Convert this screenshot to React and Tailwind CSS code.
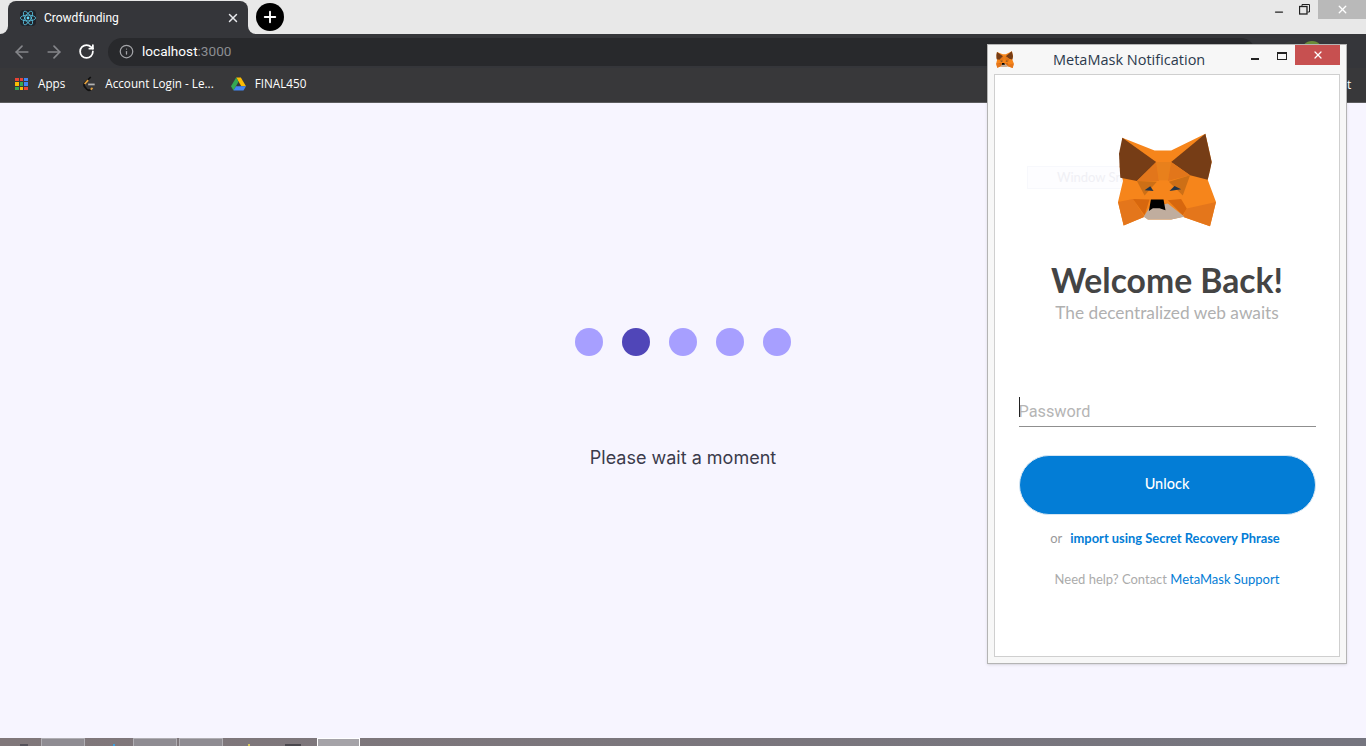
import React from "react";
import { ArrowLeft, ArrowRight, RotateCw, Info, Plus, X, Minus } from "lucide-react";

const ReactIcon = () => (
  <div className="w-4 h-4 rounded-sm bg-[#20232a] flex items-center justify-center">
    <svg viewBox="-11.5 -10.2 23 20.4" className="w-4 h-4" fill="none" stroke="#61dafb" strokeWidth="1">
      <circle r="2" fill="#61dafb" stroke="none" />
      <ellipse rx="11" ry="4.2" />
      <ellipse rx="11" ry="4.2" transform="rotate(60)" />
      <ellipse rx="11" ry="4.2" transform="rotate(120)" />
    </svg>
  </div>
);

const AppsIcon = () => {
  const colors = ["#ea4335", "#ea4335", "#4285f4", "#fbbc04", "#34a853", "#4285f4", "#34a853", "#fbbc04", "#ea4335"];
  return (
    <div className="grid grid-cols-3 gap-px w-[13px] h-[13px]">
      {colors.map((c, i) => (
        <div key={i} className="w-[3.5px] h-[3.5px]" style={{ backgroundColor: c }} />
      ))}
    </div>
  );
};

const LeetIcon = () => (
  <svg viewBox="0 0 16 18" className="w-[14px] h-4" fill="none" strokeWidth="2">
    <path d="M10 1 L3 8 Q1.5 10 3 12 L5.5 15 Q7.5 17 10 15.5" stroke="#111" />
    <path d="M3 9 L7 4.5" stroke="#e8a33d" />
    <path d="M7 9.5 H14.5" stroke="#b3b3b3" />
    <path d="M10 15.5 L12 13.5" stroke="#e8a33d" />
  </svg>
);

const DriveIcon = () => (
  <svg viewBox="0 0 16 14" className="w-[15px] h-[14px]">
    <polygon points="5.5,0 10.5,0 16,9.5 11,9.5" fill="#fbbc04" />
    <polygon points="5.5,0 8,4.5 2.7,14 0,9.5" fill="#34a853" />
    <polygon points="5.3,9.5 16,9.5 13.3,14 2.7,14" fill="#4285f4" />
  </svg>
);

const Fox = ({ className }) => (
  <svg viewBox="55 35 295 285" className={className}>
    {/* base silhouette so no gaps show between facets */}
    <polygon points="68,52 165,90 215,90 318,40 337,125 325,178 350,245 332,318 250,290 215,298 145,298 135,290 72,316 55,245 70,182 60,140" fill="#f6851b" />
    {/* ears */}
    <polygon points="68,52 170,125 112,182 62,172 60,140 58,100" fill="#763d16" />
    <polygon points="318,40 215,125 272,165 325,178 332,150 337,125" fill="#763d16" />
    {/* forehead and brow */}
    <polygon points="170,125 215,125 205,180 178,180" fill="#e8801c" />
    <polygon points="170,125 178,182 112,182" fill="#e2761b" />
    <polygon points="215,125 205,182 272,165" fill="#e2761b" />
    <polygon points="112,182 172,184 135,226" fill="#cd6f16" />
    <polygon points="272,165 208,184 250,226" fill="#cd6f16" />
    {/* lower cheeks */}
    <polygon points="55,245 100,236 135,290 72,316" fill="#e4761b" />
    <polygon points="350,245 262,265 250,290 332,318" fill="#e4761b" />
    <polygon points="100,236 150,238 135,285" fill="#d7670e" />
    <polygon points="245,236 205,240 250,285 262,265" fill="#d7670e" />
    {/* eyes */}
    <polygon points="135,210 152,198 162,212" fill="#233447" />
    <polygon points="210,212 225,197 245,207" fill="#233447" />
    {/* snout */}
    <polygon points="150,262 205,250 255,290 215,298 145,298 132,290" fill="#c0ad9e" />
    <polygon points="154,238 192,238 198,270 180,264 160,264 148,272" fill="#000" />
  </svg>
);

export default function App() {
  return (
    <div className="relative h-screen w-full overflow-hidden flex flex-col bg-[#f7f5ff] font-['Roboto',sans-serif]">
      {/* tab strip */}
      <div className="h-[34px] shrink-0 bg-[#e8e8e8] flex items-end pl-2">
        <div className="relative w-[240px] h-[33px] bg-[#35363a] rounded-t-lg flex items-center pl-3 pr-2 gap-2 text-white">
          <div className="absolute -left-2 bottom-0 w-2 h-2 bg-[#35363a]">
            <div className="w-2 h-2 bg-[#e8e8e8] rounded-br-lg" />
          </div>
          <div className="absolute -right-2 bottom-0 w-2 h-2 bg-[#35363a]">
            <div className="w-2 h-2 bg-[#e8e8e8] rounded-bl-lg" />
          </div>
          <ReactIcon />
          <span className="text-[12px] flex-1">Crowdfunding</span>
          <X size={14} strokeWidth={2.5} className="text-[#e8eaed]" />
        </div>
        <div className="w-7 h-7 rounded-full bg-black flex items-center justify-center ml-2 mb-[3px]">
          <Plus size={18} strokeWidth={2.5} className="text-white" />
        </div>
        <div className="ml-auto self-start flex items-start h-[19px]">
          <Minus size={12} strokeWidth={2.5} className="text-[#222] mt-[6px] mr-[14px]" />
          <svg viewBox="0 0 11 11" className="w-[11px] h-[11px] mt-[4px] mr-[8px]" fill="none" stroke="#222" strokeWidth="1">
            <rect x="0.5" y="2.5" width="7.5" height="7.5" strokeWidth="1.3" />
            <path d="M3 2 V0.5 H10.5 V8 H8.5" />
          </svg>
          <div className="w-12 h-[19px] bg-[#b9b9b9] flex items-center justify-center">
            <X size={13} strokeWidth={2.5} className="text-white" />
          </div>
        </div>
      </div>

      {/* toolbar */}
      <div className="h-[34px] shrink-0 bg-[#35363a] flex items-center pl-[12px] pr-[111px] pt-px">
        <ArrowLeft size={20} strokeWidth={2} className="text-[#85868a]" />
        <ArrowRight size={20} strokeWidth={2} className="text-[#85868a] ml-[12px]" />
        <RotateCw size={17} strokeWidth={2.5} className="text-white ml-[14px]" />
        <div className="flex-1 h-7 ml-[13px] rounded-full bg-[#28292c] flex items-center pl-[11px]">
          <Info size={15} className="text-[#a3a4a8]" />
          <span className="ml-[8px] text-[13.6px] text-white">
            localhost<span className="text-[#8c8e92]">:3000</span>
          </span>
        </div>
      </div>

      {/* bookmarks */}
      <div className="h-[35px] shrink-0 bg-[#38383a] border-b border-[#5c5c5e] flex items-center pl-[15px] pb-[2px] text-[11.7px] text-white font-['Open_Sans',sans-serif]">
        <AppsIcon />
        <span className="ml-[10px]">Apps</span>
        <span className="ml-[17px]"><LeetIcon /></span>
        <span className="ml-[9px]">Account Login - Le...</span>
        <span className="ml-[17px]"><DriveIcon /></span>
        <span className="ml-[9px]">FINAL450</span>
      </div>

      {/* page */}
      <div className="flex-1 flex flex-col items-center pt-[225px] font-['Inter',sans-serif]">
        <div className="flex gap-[19px]">
          <div className="w-7 h-7 rounded-full bg-[#a79fff]" />
          <div className="w-7 h-7 rounded-full bg-[#5046b8]" />
          <div className="w-7 h-7 rounded-full bg-[#a79fff]" />
          <div className="w-7 h-7 rounded-full bg-[#a79fff]" />
          <div className="w-7 h-7 rounded-full bg-[#a79fff]" />
        </div>
        <p className="mt-[89px] text-[18px] leading-[26px] text-[#3b3b4b]">Please wait a moment</p>
      </div>

      {/* taskbar */}
      <div className="h-2 shrink-0 bg-gradient-to-r from-[#80777a] to-[#75757f] flex pl-5">
        <div className="w-2 h-[2px] self-end bg-[#55525a]" />
        <div className="w-[44px] ml-[13px] border-t border-x border-[#b0aeb3] bg-[#8f8c92]" />
        <div className="w-[2px] h-[2px] self-end ml-[28px] bg-[#3aa0e0]" />
        <div className="w-[44px] ml-[18px] border-t border-x border-[#b0aeb3] bg-[#8f8c92]" />
        <div className="w-[44px] ml-[2px] border-t border-x border-[#b0aeb3] bg-[#8f8c92]" />
        <div className="w-[2px] h-[2px] self-end ml-[25px] bg-[#d8c860]" />
        <div className="w-4 h-[2px] self-end ml-[35px] bg-[#4a484e]" />
        <div className="w-[43px] ml-[16px] border-t border-x border-white bg-[#a5a3a8]" />
      </div>

      {/* avatar peeking behind the popup */}
      <div className="absolute left-[1301px] top-[41px] w-[22px] h-[22px] rounded-full bg-[#6b8e3a]" />
      <span className="absolute left-[1347px] top-[76px] text-[12px] text-white font-['Open_Sans',sans-serif]">t</span>

      {/* metamask popup */}
      <div className="absolute left-[987px] top-[44px] w-[360px] h-[620px] bg-[#f7f7f7] border border-[#b4b4b4] shadow-sm flex flex-col">
        <div className="h-[29px] shrink-0 flex items-start relative">
          <Fox className="w-[18px] h-[17px] ml-2 mt-[6px]" />
          <span className="ml-[39px] mt-1 text-[14.5px] text-[#2b3a4d] font-['Open_Sans',sans-serif]">MetaMask Notification</span>
          <div className="ml-auto mr-[6px] flex items-start">
            <div className="w-2 h-[2px] bg-[#222] mt-[13px] mr-[18px]" />
            <div className="w-[10px] h-2 border border-t-2 border-[#222] mt-[7px] mr-[8px]" />
            <div className="w-[45px] h-5 bg-[#c75050] flex items-center justify-center">
              <X size={12} strokeWidth={2.5} className="text-white" />
            </div>
          </div>
        </div>
        <div className="relative mx-[6px] h-[583px] bg-white border border-[#cfcfcf] flex flex-col items-center font-['Lato',sans-serif]">
          {/* faint snip tool hint behind the fox */}
          <div className="absolute left-[32px] top-[91px] w-[110px] h-[23px] border border-[#f7f8fc] bg-[#fdfdff] flex items-center pl-[29px] text-[13px] text-[#f0f0f5] overflow-hidden whitespace-nowrap">
            Window Snip
          </div>
          <Fox className="relative w-[98px] h-[95px] mt-[57px]" />
          <h1 className="mt-[33px] text-[33.7px] leading-10 font-bold text-[#444]">Welcome Back!</h1>
          <p className="mt-[3px] text-[17.3px] leading-5 text-[#b0b0b0]">The decentralized web awaits</p>
          <div className="relative mt-[73px] w-[297px] h-[31px] border-b border-[#8f8f8f] flex items-center pt-[2px] text-[16.3px] text-[#b5b5b5] font-['Roboto',sans-serif]">
            <span className="absolute left-0 top-[1px] w-px h-5 bg-[#222]" />
            Password
          </div>
          <button className="mt-[28px] w-[297px] h-[60px] rounded-full bg-[#037dd6] border border-[#d6e6f3] text-white text-[14.5px] font-medium pb-[3px]">
            Unlock
          </button>
          <p className="mt-[15px] mr-1 text-[12.9px] leading-[16px] text-[#9a9a9a]">
            or <a className="ml-[5px] font-bold text-[#037dd6]">import using Secret Recovery Phrase</a>
          </p>
          <p className="mt-[25px] text-[13px] leading-[16px] text-[#ababab]">
            Need help? Contact <a className="text-[#037dd6]">MetaMask Support</a>
          </p>
        </div>
      </div>
    </div>
  );
}
